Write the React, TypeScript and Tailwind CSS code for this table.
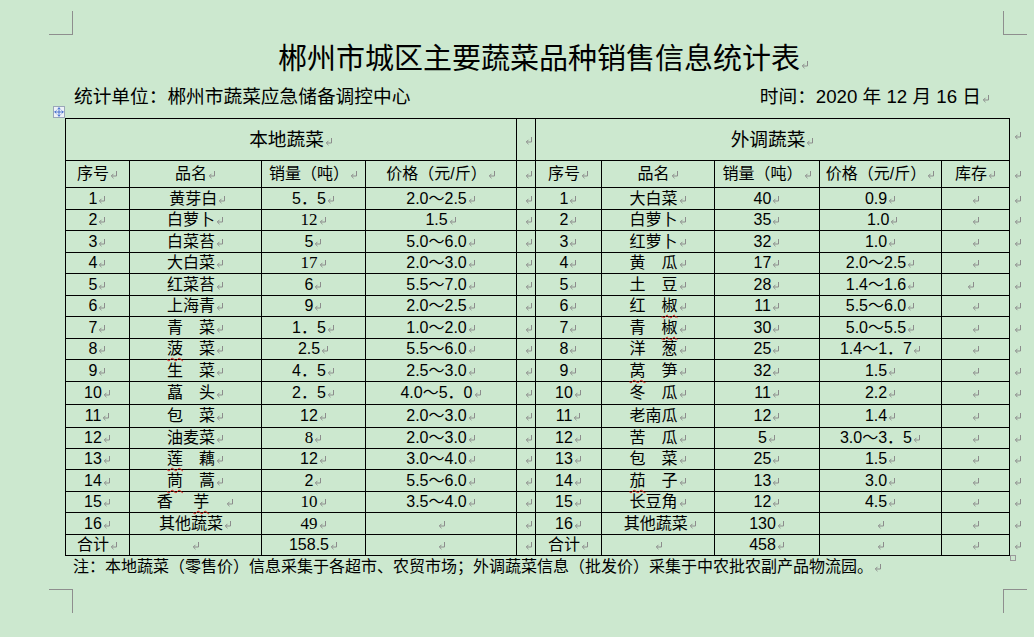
import React from "react";
import { Move } from "lucide-react";

// paragraph mark as Word draws it
const Mark = ({ className = "" }: { className?: string }) => (
  <svg
    width="8"
    height="9"
    viewBox="0 0 8 9"
    fill="none"
    stroke="#8c8c8c"
    strokeWidth="1"
    className={`inline-block align-baseline ml-px ${className}`}
  >
    <path d="M6.5 1v5H1.5" />
    <path d="M3.5 3.8L1.3 6l2.2 2.2" />
  </svg>
);

const W = ({ children }: { children: React.ReactNode }) => (
  <span className="underline decoration-wavy decoration-[#e0201c] decoration-1 underline-offset-[3px]">{children}</span>
);

const S = ({ children }: { children: React.ReactNode }) => (
  <span className="text-[17px] font-['Liberation_Serif','Noto_Sans_CJK_SC',serif]">{children}</span>
);

type Row = { no: string; name: React.ReactNode; qty: React.ReactNode; price: React.ReactNode };

const local: Row[] = [
  { no: "1", name: " 黄芽白", qty: "5．5", price: "2.0～2.5" },
  { no: "2", name: "白萝卜", qty: <S>12</S>, price: "1.5" },
  { no: "3", name: "白菜苔", qty: "5", price: "5.0～6.0" },
  { no: "4", name: "大白菜", qty: <S>17</S>, price: "2.0～3.0" },
  { no: "5", name: "红菜苔", qty: "6", price: "5.5～7.0" },
  { no: "6", name: "上海青", qty: "9", price: "2.0～2.5" },
  { no: "7", name: "青　菜", qty: "1．5", price: "1.0～2.0" },
  { no: "8", name: <><W>菠</W>　菜</>, qty: "2.5", price: "5.5～6.0" },
  { no: "9", name: "生　菜", qty: "4．5", price: "2.5～3.0" },
  { no: "10", name: "藠　头", qty: "2．5", price: "4.0～5．0" },
  { no: "11", name: "包　菜", qty: "12", price: "2.0～3.0" },
  { no: "12", name: "油麦菜", qty: <S>8</S>, price: "2.0～3.0" },
  { no: "13", name: <><W>莲</W>　藕</>, qty: "12", price: "3.0～4.0" },
  { no: "14", name: <><W>茼</W>　蒿</>, qty: "2", price: "5.5～6.0" },
  { no: "15", name: <>香　 <W>芋</W>　</>, qty: <S>10</S>, price: "3.5～4.0" },
  { no: "16", name: "其他蔬菜", qty: <S>49</S>, price: "" },
];

const outside: Row[] = [
  { no: "1", name: "大白菜", qty: "40", price: "0.9" },
  { no: "2", name: "白萝卜", qty: "35", price: " 1.0" },
  { no: "3", name: "红萝卜", qty: "32", price: "1.0" },
  { no: "4", name: "黄　瓜", qty: "17", price: "2.0～2.5" },
  { no: "5", name: "土　豆", qty: "28", price: "1.4～1.6" },
  { no: "6", name: <>红　<W>椒</W></>, qty: "11", price: "5.5～6.0" },
  { no: "7", name: <>青　<W>椒</W></>, qty: "30", price: "5.0～5.5" },
  { no: "8", name: "洋　葱", qty: "25", price: "1.4～1．7" },
  { no: "9", name: <><W>莴</W>　笋</>, qty: "32", price: "1.5" },
  { no: "10", name: "冬　瓜", qty: "11", price: "2.2" },
  { no: "11", name: "老南瓜", qty: "12", price: "1.4" },
  { no: "12", name: "苦　瓜", qty: "5", price: "3.0～3．5" },
  { no: "13", name: "包　菜", qty: "25", price: "1.5" },
  { no: "14", name: <><W>茄</W>　子</>, qty: "13", price: "3.0" },
  { no: "15", name: "长豆角", qty: "12", price: "4.5" },
  { no: "16", name: " 其他蔬菜", qty: "130", price: "" },
];

const heights = [
  "h-[22px]", "h-[21px]", "h-[22px]", "h-[21px]", "h-[22px]", "h-[21px]", "h-[22px]", "h-[21px]",
  "h-[22px]", "h-[23px]", "h-[23px]", "h-[21px]", "h-[21px]", "h-[22px]", "h-[21px]", "h-[22px]", "h-[20px]",
];

function Cell({
  children,
  className = "",
  span = 1,
}: {
  children?: React.ReactNode;
  className?: string;
  span?: number;
}) {
  return (
    <td colSpan={span} className={`border border-black p-0 text-center whitespace-pre ${className}`}>
      {children}
      <Mark />
    </td>
  );
}

const Spacer = () => (
  <td className="border border-black p-0 pr-[2px] text-right">
    <Mark />
  </td>
);

const Outer = ({ top = false }: { top?: boolean }) => (
  <td className={`border-0 p-0 pl-[3px] text-left ${top ? "align-top pt-[6px]" : ""}`}>
    <Mark />
  </td>
);

const CropMark = ({ className }: { className: string }) => (
  <div className={`absolute w-[24px] h-[24px] border-[#8e8e8e] ${className}`} />
);

export default function App() {
  const rows = local.map((l, i) => ({ l, r: outside[i] }));

  return (
    <div className="relative w-[1034px] h-[637px] overflow-hidden bg-[#cce8cf] text-black font-['Liberation_Sans','Noto_Sans_CJK_SC',sans-serif]">
      <CropMark className="left-[49px] top-[11px] border-r border-b" />
      <CropMark className="left-[1003px] top-[11px] border-l border-b" />
      <CropMark className="left-[49px] top-[589px] border-r border-t" />
      <CropMark className="left-[1003px] top-[589px] border-l border-t" />

      <div className="flex flex-col pt-[38px]">
        <div className="h-[36px] pl-[278px] text-[29px] leading-[36px] font-['Noto_Sans_CJK_SC',sans-serif]">
          郴州市城区主要蔬菜品种销售信息统计表
          <Mark />
        </div>

        <div className="mt-[11px] flex h-[24px] items-center pl-[74px] pr-[44px] text-[18.7px] leading-[24px]">
          <span>统计单位：郴州市蔬菜应急储备调控中心</span>
          <span className="ml-auto">
            时间：2020 年 12 月 16 日
            <Mark />
          </span>
        </div>

        <div className="relative mt-[9px] ml-[65px]">
          <div className="absolute -left-[12px] -top-[12px] flex h-[12px] w-[12px] items-center justify-center border border-[#9aa7b8] bg-[#eef2f8]">
            <Move size={10} strokeWidth={2} className="text-[#2f5fc8]" />
          </div>

          <table className="w-[964px] table-fixed border-collapse text-[16px] leading-[20px]">
            <colgroup>
              <col className="w-[64px]" />
              <col className="w-[132px]" />
              <col className="w-[104px]" />
              <col className="w-[151px]" />
              <col className="w-[19px]" />
              <col className="w-[66px]" />
              <col className="w-[113px]" />
              <col className="w-[105px]" />
              <col className="w-[122px]" />
              <col className="w-[68px]" />
              <col className="w-[20px]" />
            </colgroup>
            <tbody>
              <tr className="h-[42px]">
                <Cell span={4} className="text-[18.7px]">本地蔬菜</Cell>
                <Spacer />
                <Cell span={5} className="text-[18.7px]">外调蔬菜</Cell>
                <Outer top />
              </tr>
              <tr className="h-[27px]">
                <Cell>序号</Cell>
                <Cell>品名</Cell>
                <Cell>销量（吨）</Cell>
                <Cell>价格（元/斤）</Cell>
                <Spacer />
                <Cell>序号</Cell>
                <Cell>品名</Cell>
                <Cell>销量（吨）</Cell>
                <Cell>价格（元/斤）</Cell>
                <Cell>库存</Cell>
                <Outer />
              </tr>
              {rows.map(({ l, r }, i) => (
                <tr key={l.no} className={heights[i]}>
                  <Cell>{l.no}</Cell>
                  <Cell>{l.name}</Cell>
                  <Cell>{l.qty}</Cell>
                  <Cell>{l.price}</Cell>
                  <Spacer />
                  <Cell>{r.no}</Cell>
                  <Cell>{r.name}</Cell>
                  <Cell>{r.qty}</Cell>
                  <Cell>{r.price}</Cell>
                  <Cell className={i === 4 ? "pr-[10px]" : ""} />
                  <Outer />
                </tr>
              ))}
              <tr className={heights[16]}>
                <Cell>合计</Cell>
                <Cell />
                <Cell>158.5</Cell>
                <Cell />
                <Spacer />
                <Cell>合计</Cell>
                <Cell />
                <Cell>458</Cell>
                <Cell />
                <Cell />
                <Outer />
              </tr>
            </tbody>
          </table>

          <div className="absolute left-[945px] top-[437px] h-[6px] w-[6px] border border-[#9a9a9a]" />
        </div>

        <div className="h-[22px] pl-[73px] text-[16px] leading-[22px]">
          注：本地蔬菜（零售价）信息采集于各超市、农贸市场；外调蔬菜信息（批发价）采集于中农批农副产品物流园。
          <Mark />
        </div>
      </div>
    </div>
  );
}
